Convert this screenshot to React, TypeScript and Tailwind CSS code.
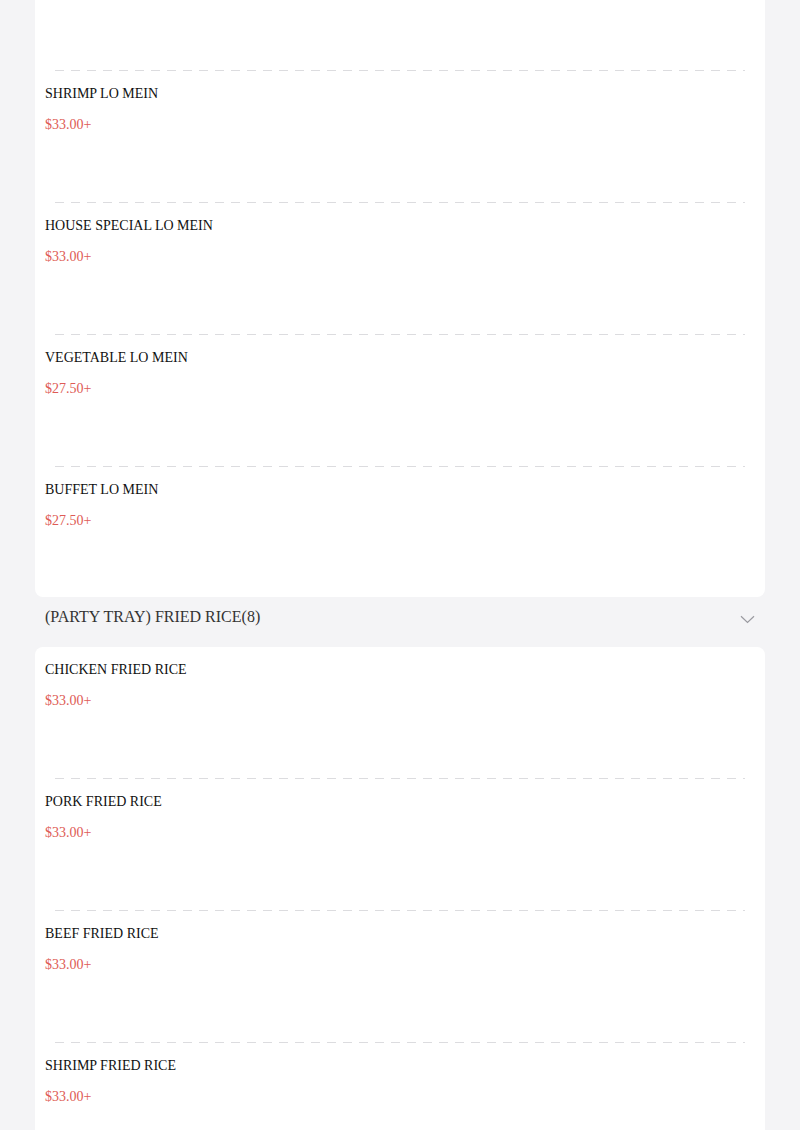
import React from "react";

type Item = { name: string; price: string };

const card1: Item[] = [
  { name: "SHRIMP LO MEIN", price: "$33.00+" },
  { name: "HOUSE SPECIAL LO MEIN", price: "$33.00+" },
  { name: "VEGETABLE LO MEIN", price: "$27.50+" },
  { name: "BUFFET LO MEIN", price: "$27.50+" },
];

const card2: Item[] = [
  { name: "CHICKEN FRIED RICE", price: "$33.00+" },
  { name: "PORK FRIED RICE", price: "$33.00+" },
  { name: "BEEF FRIED RICE", price: "$33.00+" },
  { name: "SHRIMP FRIED RICE", price: "$33.00+" },
];

function Divider() {
  return (
    <div className="mx-[20px] h-px bg-[linear-gradient(to_right,#dcdcdf_55%,transparent_0)] bg-[length:16px_1px] bg-repeat-x" />
  );
}

function MenuItem({ item, last }: { item: Item; last?: boolean }) {
  return (
    <div className={`${last ? "h-[130px]" : "h-[131px]"} px-[10px] pt-[13px]`}>
      <div className="text-[14px] leading-5 text-[#111]">{item.name}</div>
      <div className="mt-[11px] text-[14px] leading-5 text-[#de5b55]">{item.price}</div>
    </div>
  );
}

export default function App() {
  return (
    <div
      className="h-[1130px] overflow-hidden bg-[#f4f4f6] px-[35px]"
      style={{ fontFamily: '"Liberation Serif", "Times New Roman", serif' }}
    >
      <div className="overflow-hidden rounded-b-lg bg-white">
        <div className="h-[70px]" />
        {card1.map((it, i) => (
          <React.Fragment key={it.name}>
            <Divider />
            <MenuItem item={it} last={i === card1.length - 1} />
          </React.Fragment>
        ))}
      </div>
      <div className="flex h-[50px] items-start justify-between px-[10px] pt-[8px]">
        <div className="text-[16px] leading-6 text-[#333]">(PARTY TRAY) FRIED RICE(8)</div>
        <svg
          className="mt-[10px]"
          width="15"
          height="9"
          viewBox="0 0 15 9"
          fill="none"
          stroke="#9a9aa0"
          strokeWidth="1.2"
        >
          <path d="M1 1.2 L7.5 7.5 L14 1.2" />
        </svg>
      </div>
      <div className="overflow-hidden rounded-t-lg bg-white">
        {card2.map((it, i) => (
          <React.Fragment key={it.name}>
            {i > 0 && <Divider />}
            <MenuItem item={it} />
          </React.Fragment>
        ))}
      </div>
    </div>
  );
}
